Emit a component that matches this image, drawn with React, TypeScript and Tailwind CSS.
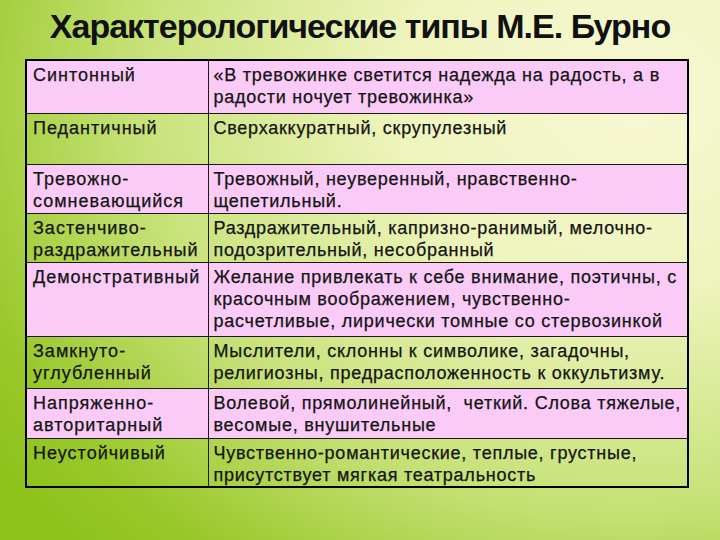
const rows: { name: string[]; desc: string[]; pink: boolean; h: string }[] = [
  {
    name: ["Синтонный"],
    desc: ["«В тревожинке светится надежда на радость, а в", "радости ночует тревожинка»"],
    pink: true,
    h: "h-[53px]",
  },
  { name: ["Педантичный"], desc: ["Сверхаккуратный, скрупулезный"], pink: false, h: "h-[51px]" },
  {
    name: ["Тревожно-", "сомневающийся"],
    desc: ["Тревожный, неуверенный, нравственно-", "щепетильный."],
    pink: true,
    h: "h-[49px]",
  },
  {
    name: ["Застенчиво-", "раздражительный"],
    desc: ["Раздражительный, капризно-ранимый, мелочно-", "подозрительный, несобранный"],
    pink: false,
    h: "h-[49px]",
  },
  {
    name: ["Демонстративный"],
    desc: [
      "Желание привлекать к себе внимание, поэтичны, с",
      "красочным воображением, чувственно-",
      "расчетливые, лирически томные со стервозинкой",
    ],
    pink: true,
    h: "h-[74px]",
  },
  {
    name: ["Замкнуто-", "углубленный"],
    desc: ["Мыслители, склонны к символике, загадочны,", "религиозны, предрасположенность к оккультизму."],
    pink: false,
    h: "h-[52px]",
  },
  {
    name: ["Напряженно-", "авторитарный"],
    desc: ["Волевой, прямолинейный,  четкий. Слова тяжелые,", "весомые, внушительные"],
    pink: true,
    h: "h-[50px]",
  },
  {
    name: ["Неустойчивый"],
    desc: ["Чувственно-романтические, теплые, грустные,", "присутствует мягкая театральность"],
    pink: false,
    h: "h-[49px]",
  },
];

function Lines({ lines }: { lines: string[] }) {
  return (
    <>
      {lines.map((l, i) => (
        <div key={i} className="whitespace-pre">
          {l}
        </div>
      ))}
    </>
  );
}

export default function App() {
  return (
    <div className="h-[540px] w-[720px] overflow-hidden bg-[radial-gradient(ellipse_110%_120%_at_88%_18%,#f8f8d4_0%,#eef4bc_30%,#c8e27a_62%,#98c828_88%,#8cc21a_100%)] font-['Liberation_Sans',Arial,sans-serif] text-[#141414]">
      <h1 className="flex h-[57px] items-center justify-center pb-[5px] text-[34px] font-bold tracking-[-1px] text-[#111]">
        Характерологические типы М.Е. Бурно
      </h1>
      <div className="ml-[25px] mt-[2px] w-[664px]">
        <table className="w-full table-fixed border-collapse border-2 border-black text-[18px] leading-[22px] [-webkit-text-stroke:0.25px_#141414]">
          <colgroup>
            <col className="w-[182px]" />
            <col />
          </colgroup>
          <tbody>
            {rows.map((r, i) => (
              <tr key={i} className={`${r.h} ${r.pink ? "bg-[#f9cbf6]" : ""}`}>
                <td className="overflow-visible border border-[#1a1a1a] pl-[6px] pr-0 pt-[3px] align-top tracking-[1px]">
                  <Lines lines={r.name} />
                </td>
                <td className="border border-[#1a1a1a] px-[5px] pt-[3px] align-top tracking-[0.75px]">
                  <Lines lines={r.desc} />
                </td>
              </tr>
            ))}
          </tbody>
        </table>
      </div>
    </div>
  );
}
